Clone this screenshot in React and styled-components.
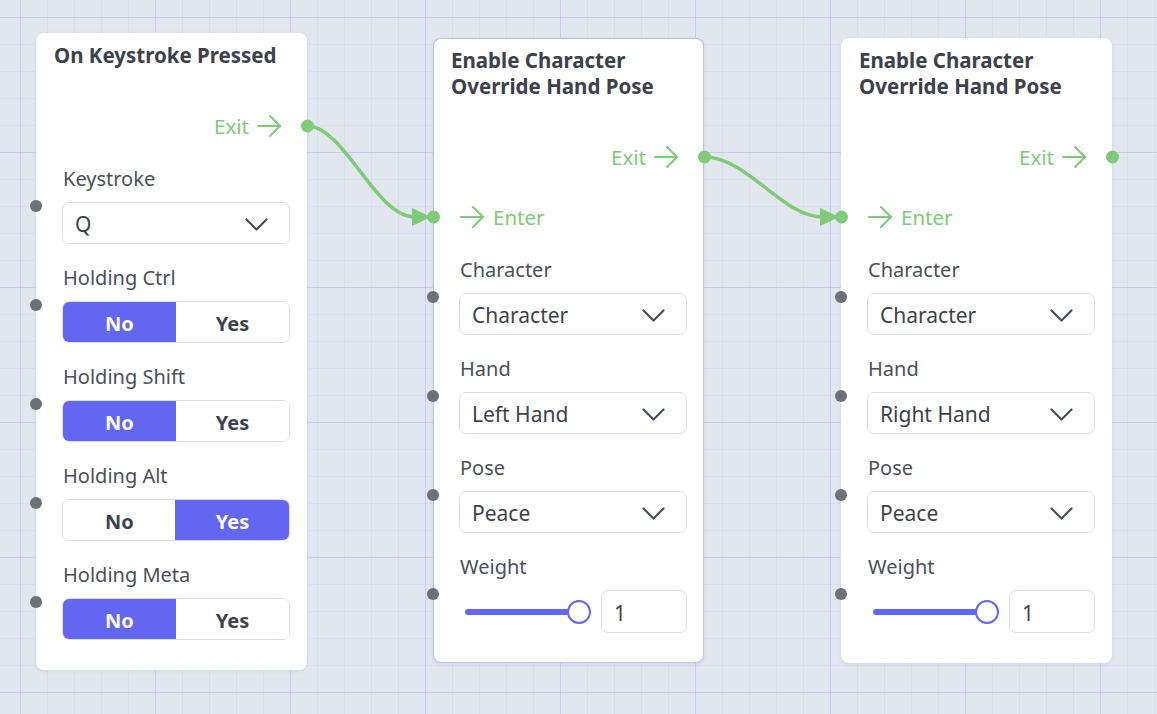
import styled, { createGlobalStyle } from 'styled-components'

const GREEN = '#7fcb77'
const INDIGO = '#6366f1'

const GlobalStyle = createGlobalStyle`
  html, body {
    margin: 0;
    padding: 0;
    overflow: hidden;
  }
  body {
    font-family: 'Noto Sans', 'Open Sans', sans-serif;
  }
`

const ArrowIcon = () => (
  <svg width='27' height='24' viewBox='0 0 27 24' fill='none' stroke={GREEN} strokeWidth='2' strokeLinecap='round' strokeLinejoin='round'>
    <path d='M2 12h22' />
    <path d='M14 2l10 10-10 10' />
  </svg>
)

const Chevron = () => (
  <svg width='23' height='13' viewBox='0 0 23 13' fill='none' stroke='#4a4f5a' strokeWidth='2.2' strokeLinecap='round' strokeLinejoin='round'>
    <path d='M1.5 1.5l10 10 10-10' />
  </svg>
)

const Select = ({ value }) => (
  <SelectBox>
    <span>{value}</span>
    <Chevron />
  </SelectBox>
)

const Toggle = ({ value }) => (
  <ToggleBox>
    <ToggleOption $active={!value}>No</ToggleOption>
    <ToggleOption $active={value}>Yes</ToggleOption>
  </ToggleBox>
)

const Field = ({ label, children }) => (
  <FieldBlock>
    <InDot />
    <Label>{label}</Label>
    {children}
  </FieldBlock>
)

const ExitPort = () => (
  <PortRow $side='out'>
    <PortText>Exit</PortText>
    <ArrowIcon />
    <ExecDot $side='out' />
  </PortRow>
)

const EnterPort = () => (
  <PortRow $side='in'>
    <ArrowIcon />
    <PortText>Enter</PortText>
    <ExecDot $side='in' />
  </PortRow>
)

const HandPoseNode = ({ left, top, hand, selected }) => (
  <Node $left={left} $top={top} $selected={selected}>
    <Title>
      Enable Character
      <br />
      Override Hand Pose
    </Title>
    <ExitPort />
    <EnterPort />
    <Field label='Character'>
      <Select value='Character' />
    </Field>
    <Field label='Hand'>
      <Select value={hand} />
    </Field>
    <Field label='Pose'>
      <Select value='Peace' />
    </Field>
    <Field label='Weight'>
      <WeightRow>
        <Slider>
          <Track />
          <Thumb />
        </Slider>
        <NumberBox>1</NumberBox>
      </WeightRow>
    </Field>
  </Node>
)

const App = () => {
  return (
    <Canvas>
      <GlobalStyle />
      <Wires width='1157' height='714' viewBox='0 0 1157 714'>
        <path d='M307 126 C345 126 375 217 415 217' />
        <polygon points='412,208 431,217 412,226' />
        <path d='M704 157 C748 157 782 217 823 217' />
        <polygon points='820,208 839,217 820,226' />
      </Wires>

      <Node $left={36} $top={33}>
        <Title>On Keystroke Pressed</Title>
        <ExitPort />
        <Field label='Keystroke'>
          <Select value='Q' />
        </Field>
        <Field label='Holding Ctrl'>
          <Toggle value={false} />
        </Field>
        <Field label='Holding Shift'>
          <Toggle value={false} />
        </Field>
        <Field label='Holding Alt'>
          <Toggle value={true} />
        </Field>
        <Field label='Holding Meta'>
          <Toggle value={false} />
        </Field>
      </Node>

      <HandPoseNode left={433} top={38} hand='Left Hand' selected />
      <HandPoseNode left={841} top={38} hand='Right Hand' />
    </Canvas>
  )
}

export default App

const Canvas = styled.div`
  position: relative;
  width: 1157px;
  height: 714px;
  overflow: hidden;
  background-color: #e2e7ef;
  background-image:
    linear-gradient(rgba(129, 140, 248, 0.2) 1px, transparent 1px),
    linear-gradient(90deg, rgba(129, 140, 248, 0.2) 1px, transparent 1px),
    linear-gradient(rgba(129, 140, 248, 0.1) 1px, transparent 1px),
    linear-gradient(90deg, rgba(129, 140, 248, 0.1) 1px, transparent 1px);
  background-size: 135px 135px, 135px 135px, 27px 27px, 27px 27px;
  background-position: 20px 17px, 20px 17px, 20px 17px, 20px 17px;
`

const Wires = styled.svg`
  position: absolute;
  inset: 0;
  pointer-events: none;

  path {
    fill: none;
    stroke: ${GREEN};
    stroke-width: 3.5;
    stroke-linecap: round;
  }

  polygon {
    fill: ${GREEN};
  }
`

const Node = styled.div`
  position: absolute;
  left: ${p => p.$left}px;
  top: ${p => p.$top}px;
  width: 271px;
  box-sizing: border-box;
  background: #fff;
  border-radius: 8px;
  border: 1px solid ${p => (p.$selected ? 'rgba(129, 140, 248, 0.55)' : 'transparent')};
  box-shadow: 0 1px 4px rgba(30, 41, 59, 0.08);
  padding: 8px 16px 29px 25px;
  display: flex;
  flex-direction: column;
  gap: 22px;
`

const Title = styled.div`
  margin-left: -8px;
  margin-bottom: 17px;
  font-size: 20.5px;
  line-height: 26px;
  font-weight: 700;
  color: #3d414b;
`

const PortRow = styled.div`
  position: relative;
  height: 38px;
  display: flex;
  align-items: center;
  justify-content: ${p => (p.$side === 'out' ? 'flex-end' : 'flex-start')};
  gap: 7px;
  margin-right: ${p => (p.$side === 'out' ? '7px' : '0')};
`

const PortText = styled.span`
  font-size: 20.5px;
  color: ${GREEN};
`

const ExecDot = styled.span`
  position: absolute;
  top: 50%;
  width: 13px;
  height: 13px;
  border-radius: 50%;
  background: ${GREEN};
  transform: translateY(-50%);
  ${p => (p.$side === 'out' ? 'right: -31px;' : 'left: -32.5px;')}
`

const FieldBlock = styled.div`
  position: relative;
  display: flex;
  flex-direction: column;
  gap: 11px;
`

const InDot = styled.span`
  position: absolute;
  left: -32.5px;
  top: 50%;
  width: 12px;
  height: 12px;
  border-radius: 50%;
  background: #6b7079;
  transform: translateY(-50%);
`

const Label = styled.div`
  font-size: 20px;
  line-height: 24px;
  color: #4b505a;
  padding-left: 1px;
`

const SelectBox = styled.div`
  box-sizing: border-box;
  height: 42px;
  border: 1px solid #dcdfe5;
  border-radius: 7px;
  padding: 2px 21px 0 12px;
  display: flex;
  align-items: center;
  justify-content: space-between;
  font-size: 21px;
  color: #3d424c;
`

const ToggleBox = styled.div`
  box-sizing: border-box;
  height: 42px;
  border: 1px solid #dcdfe5;
  border-radius: 7px;
  overflow: hidden;
  display: grid;
  grid-template-columns: 1fr 1fr;
`

const ToggleOption = styled.div`
  display: flex;
  align-items: center;
  justify-content: center;
  padding-top: 2px;
  font-size: 20px;
  font-weight: 700;
  background: ${p => (p.$active ? INDIGO : '#fff')};
  color: ${p => (p.$active ? '#fff' : '#3d424c')};
  margin: ${p => (p.$active ? '-1px' : '0')};
`

const WeightRow = styled.div`
  display: flex;
  align-items: center;
  gap: 10px;
`

const Slider = styled.div`
  flex: 1;
  height: 43px;
  display: flex;
  align-items: center;
  padding-left: 6px;
`

const Track = styled.div`
  flex: 1;
  height: 6px;
  border-radius: 3px;
  background: ${INDIGO};
`

const Thumb = styled.div`
  box-sizing: border-box;
  width: 24px;
  height: 24px;
  margin-left: -12px;
  border-radius: 50%;
  background: #fff;
  border: 2.5px solid ${INDIGO};
`

const NumberBox = styled.div`
  box-sizing: border-box;
  width: 86px;
  height: 43px;
  border: 1px solid #dcdfe5;
  border-radius: 7px;
  padding: 2px 0 0 12px;
  display: flex;
  align-items: center;
  font-size: 21px;
  color: #3d424c;
`
